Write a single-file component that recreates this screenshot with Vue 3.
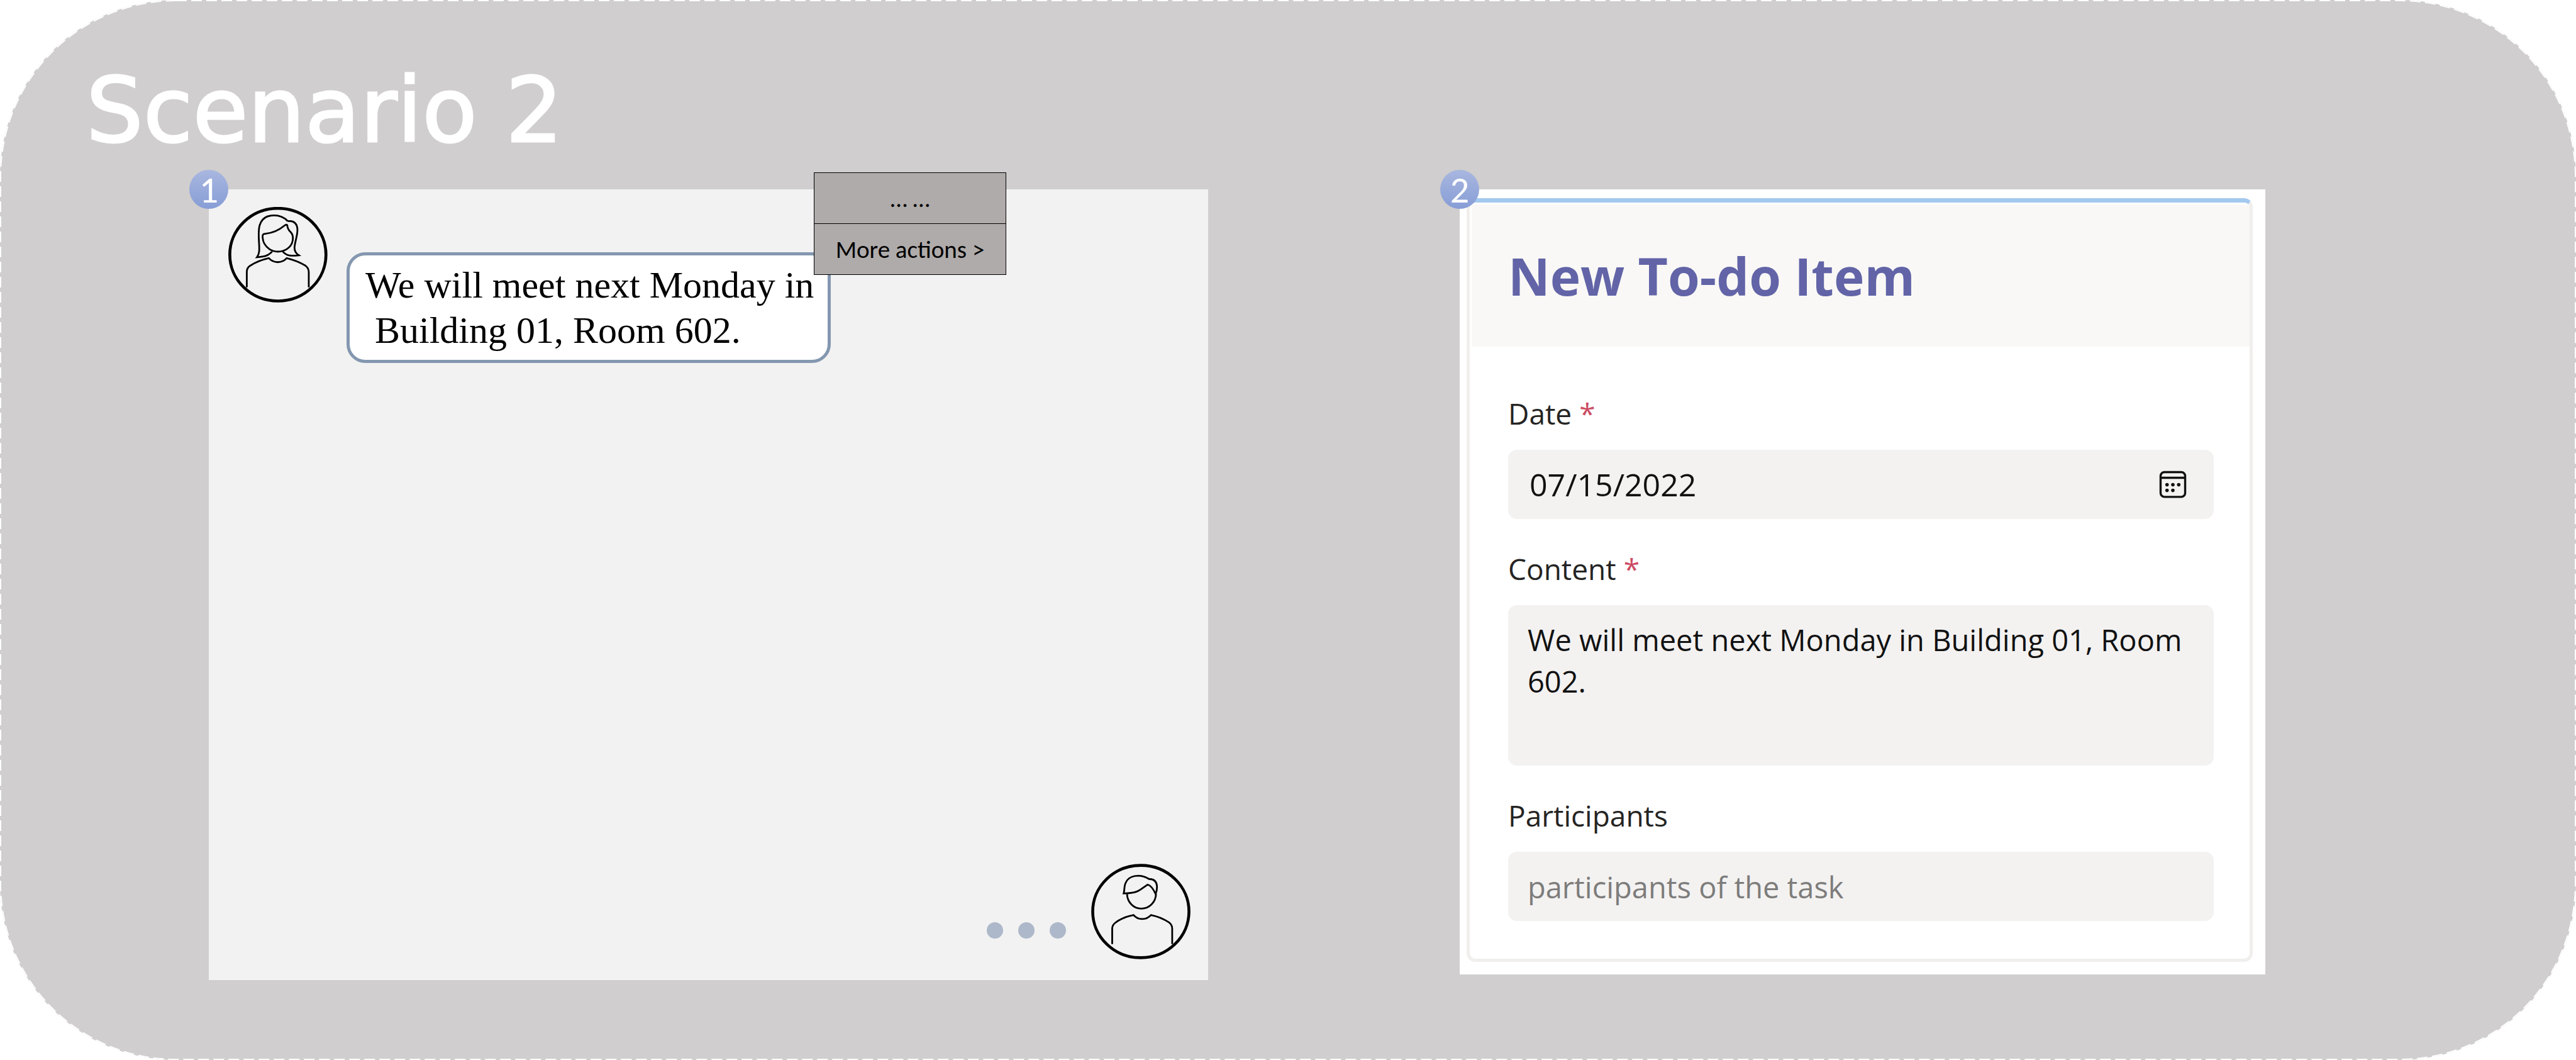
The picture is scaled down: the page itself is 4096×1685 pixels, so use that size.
<script setup>
import { ref } from 'vue'

const date = ref('07/15/2022')
const content = ref('We will meet next Monday in Building 01, Room 602.')
const participants = ref('')
const message = 'We will meet next Monday in\n Building 01, Room 602.'
</script>

<template>
  <main class="stage">
    <svg class="outline" aria-hidden="true">
      <rect x="0" y="0" width="100%" height="100%" rx="280" />
    </svg>

    <h1 class="title">Scenario 2</h1>

    <div class="panels">
      <section class="chat">
        <span class="badge">1</span>
        <div class="incoming">
          <svg class="avatar" viewBox="210 252 507 489" role="img" aria-label="Sender">
            <ellipse class="ring" cx="463" cy="496" rx="246" ry="237" />
            <path d="M514 325C494 303 470 295 443 295C395 295 365 322 365 385C364 430 370 450 367 480Q365 498 356 509C390 506 410 505 434 480" />
            <path d="M514 325C545 320 563 338 563 370C563 400 548 440 548 460C548 478 556 490 570 499C535 503 510 505 488 480" />
            <path d="M385 408C383 392 388 390 398 389C440 385 470 370 497 347Q509 338 511 346C513 368 520 372 528 380C547 400 545 445 508 468C480 485 445 484 420 468C395 450 386 430 385 408Z" />
            <path d="M304 663V585Q304 562 322 552C350 534 385 521 417 514C440 541 485 541 508 514C545 523 575 535 604 552Q621 565 621 585V663" />
          </svg>
          <div class="bubble">
            <p class="message">{{ message }}</p>
            <div class="menu">
              <button type="button">… …</button>
              <button type="button">More actions &gt;</button>
            </div>
          </div>
        </div>
        <div class="outgoing">
          <div class="typing"><i></i><i></i><i></i></div>
          <svg class="avatar" viewBox="612 108 510 488" role="img" aria-label="Receiver">
            <ellipse class="ring" cx="867" cy="352" rx="247" ry="237" />
            <path d="M779 259C784 245 780 220 790 203C805 168 860 155 909 185C940 185 950 205 950 228Q950 245 943 262C935 245 920 218 902 214C880 228 865 243 845 250C825 258 800 258 779 259Z" />
            <path d="M796 262C798 305 830 337 869 337C910 337 943 305 945 262" />
            <path d="M720 519V440Q720 420 738 408C765 388 800 375 830 370C852 397 895 397 919 370C955 377 985 390 1012 408Q1028 420 1028 440V519" />
          </svg>
        </div>
      </section>

      <section class="task">
        <span class="badge">2</span>
        <form class="card" @submit.prevent>
          <header class="card-head"><h2>New To-do Item</h2></header>
          <div class="fields">
            <div class="field">
              <label for="date">Date <b>*</b></label>
              <div class="box date-box">
                <input id="date" v-model="date" type="text" />
                <button type="button" class="picker" aria-label="Choose date">
                  <svg viewBox="390 187 142 142">
                    <rect x="398" y="195" width="126" height="127" rx="20" />
                    <path d="M398 224H524" />
                    <g class="days">
                      <circle cx="431" cy="260" r="9" />
                      <circle cx="461" cy="260" r="9" />
                      <circle cx="491" cy="260" r="9" />
                      <circle cx="431" cy="289" r="9" />
                      <circle cx="461" cy="289" r="9" />
                    </g>
                  </svg>
                </button>
              </div>
            </div>
            <div class="field">
              <label for="content">Content <b>*</b></label>
              <textarea id="content" v-model="content" class="box"></textarea>
            </div>
            <div class="field">
              <label for="participants">Participants</label>
              <input id="participants" v-model="participants" class="box" type="text" placeholder="participants of the task" />
            </div>
          </div>
        </form>
      </section>
    </div>
  </main>
</template>

<style>
body {
  margin: 0;
  background: #fff;
}
</style>

<style scoped>
* {
  box-sizing: border-box;
}

.stage {
  position: relative;
  min-height: 100vh;
  border-radius: 280px;
  background: #d0cece;
}

.outline {
  position: absolute;
  inset: 0;
  width: 100%;
  height: 100%;
  border-radius: 280px;
  pointer-events: none;
}

.outline rect {
  fill: none;
  stroke: #fff;
  stroke-width: 4;
  stroke-dasharray: 17 7;
}

.title {
  margin: 0;
  padding: 96px 0 45px 137px;
  color: #fff;
  font: 400 143px/160px "Comic Sans MS", "DejaVu Sans", sans-serif;
  -webkit-text-stroke: 3px #fff;
}

.panels {
  display: grid;
  grid-template-columns: 332fr 1589fr 400fr 1281fr 494fr;
  align-items: start;
}

.chat {
  grid-column: 2;
  position: relative;
  display: flex;
  flex-direction: column;
  justify-content: space-between;
  min-height: 1257px;
  padding: 28px 28px 33px 31px;
  background: #f2f2f2;
}

.badge {
  position: absolute;
  z-index: 1;
  top: -31px;
  left: -31px;
  width: 62px;
  height: 62px;
  border-radius: 50%;
  background: linear-gradient(#a8b7df, #879dd6);
  color: #fff;
  font: 400 60px/64px Carlito, Lato, sans-serif;
  text-align: center;
}

.incoming {
  display: flex;
  align-items: flex-start;
  gap: 30px;
}

.avatar {
  flex: none;
  width: 158px;
  height: 152px;
  fill: none;
  stroke: #000;
  stroke-width: 9;
}

.ring {
  stroke-width: 15;
}

.bubble {
  position: relative;
  margin-top: 72px;
  padding: 11px 22px 11px 25px;
  border: 5px solid #8497b0;
  border-radius: 30px;
  background: #fff;
}

.message {
  margin: 0;
  color: #000;
  font: 60px/72px "Liberation Serif", serif;
  white-space: pre;
}

.menu {
  position: absolute;
  top: -132px;
  left: 738px;
  display: flex;
  flex-direction: column;
  width: 306px;
}

.menu button {
  height: 82px;
  padding: 2px 0 0;
  border: 1px solid #000;
  background: #afabaa;
  color: #000;
  font: 39px/48px Carlito, Lato, sans-serif;
}

.menu button + button {
  margin-top: -1px;
}

.outgoing {
  display: flex;
  justify-content: flex-end;
  align-items: flex-end;
  gap: 40px;
}

.typing {
  display: flex;
  gap: 24px;
  padding-bottom: 33px;
}

.typing i {
  width: 26px;
  height: 26px;
  border-radius: 50%;
  background: #adb8ca;
}

.task {
  grid-column: 4;
  position: relative;
  padding: 14px 20px 20px 11px;
  background: #fff;
}

.card {
  border: 5px solid #f0efed;
  border-top: 7px solid #a4c9ee;
  border-radius: 14px;
  background: #fff;
  font-family: "Segoe UI", "Open Sans", "Noto Sans", sans-serif;
}

.card-head {
  margin: 3px 0 0 3px;
  padding: 57px 58px;
  background: #f9f8f6;
}

.card-head h2 {
  margin: 0;
  color: #6264a7;
  font-size: 82px;
  font-weight: 700;
  line-height: 112px;
}

.fields {
  display: flex;
  flex-direction: column;
  gap: 47px;
  padding: 74px 57px 60px 61px;
}

.field {
  display: flex;
  flex-direction: column;
  gap: 26px;
}

.field label {
  color: #252423;
  font-size: 46px;
  line-height: 64px;
}

.field b {
  color: #cc4a62;
  font-weight: 400;
}

.box {
  width: 100%;
  height: 110px;
  padding: 2px 31px 0;
  border: 0;
  border-radius: 14px;
  outline: 0;
  background: #f3f2f1;
  color: #111;
  font: 47px/66px "Segoe UI", "Open Sans", "Noto Sans", sans-serif;
}

.box::placeholder {
  color: #7d7c7b;
  opacity: 1;
}

textarea.box {
  display: block;
  height: 255px;
  padding: 22px 31px;
  overflow: hidden;
  resize: none;
}

.date-box {
  display: flex;
  align-items: center;
  padding: 0 43px 0 34px;
  font-size: 50px;
}

.date-box input {
  flex: 1;
  min-width: 0;
  padding: 0;
  border: 0;
  outline: 0;
  background: none;
  color: inherit;
  font: inherit;
}

.picker {
  width: 44px;
  height: 44px;
  padding: 0;
  border: 0;
  background: none;
}

.picker svg {
  display: block;
  fill: none;
  stroke: #111;
  stroke-width: 11;
}

.picker .days {
  fill: #111;
  stroke: none;
}
</style>
